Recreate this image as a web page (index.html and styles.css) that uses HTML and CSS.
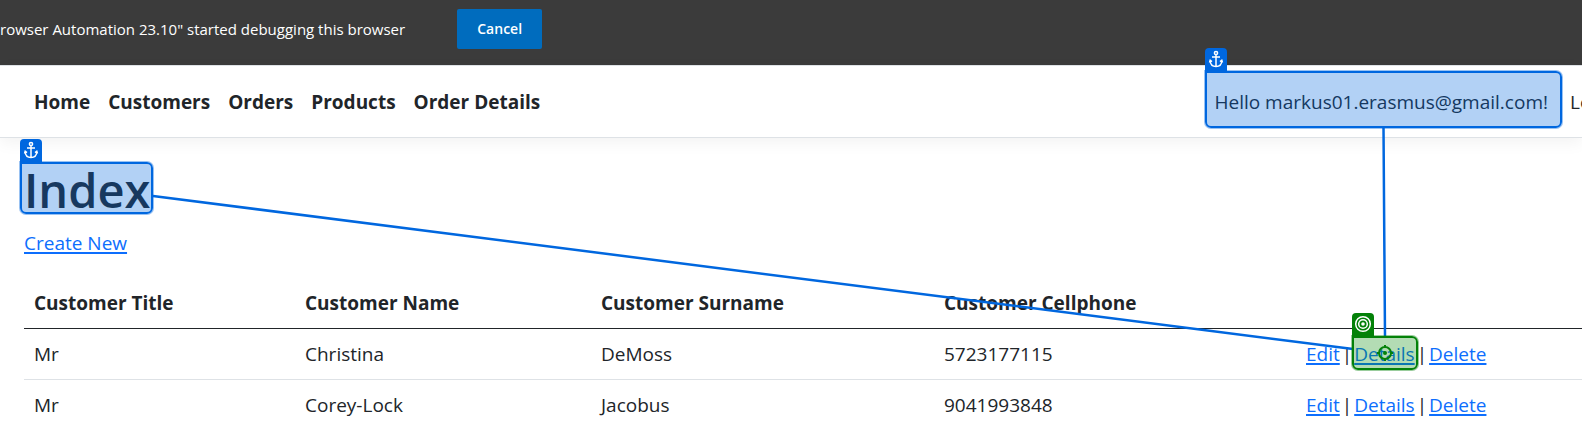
FILE: index.html
```html
<!DOCTYPE html>
<html lang="en">
<head>
<meta charset="utf-8">
<title>Index</title>
<link rel="stylesheet" href="styles.css">
</head>
<body>
<div class="infobar">
  <span class="infobar-text">rowser Automation 23.10" started debugging this browser</span>
  <button class="cancel" type="button">Cancel</button>
</div>
<header class="navbar">
  <nav class="links">
    <a href="#">Home</a>
    <a href="#">Customers</a>
    <a href="#">Orders</a>
    <a href="#">Products</a>
    <a href="#">Order Details</a>
  </nav>
  <div class="account">
    <a href="#">Hello markus01.erasmus@gmail.com!</a>
    <a class="logout" href="#">Logout</a>
  </div>
</header>
<main class="content">
  <h1>Index</h1>
  <p class="create"><a href="#">Create New</a></p>
  <table class="customers">
    <colgroup><col class="c-title"><col class="c-name"><col class="c-surname"><col class="c-phone"><col></colgroup>
    <thead>
      <tr><th>Customer Title</th><th>Customer Name</th><th>Customer Surname</th><th>Customer Cellphone</th><th></th></tr>
    </thead>
    <tbody>
      <tr><td>Mr</td><td>Christina</td><td>DeMoss</td><td>5723177115</td><td><div class="actions"><a href="#">Edit</a><span>|</span><a href="#">Details</a><span>|</span><a href="#">Delete</a></div></td></tr>
      <tr><td>Mr</td><td>Corey-Lock</td><td>Jacobus</td><td>9041993848</td><td><div class="actions"><a href="#">Edit</a><span>|</span><a href="#">Details</a><span>|</span><a href="#">Delete</a></div></td></tr>
    </tbody>
  </table>
</main>
<div class="overlay">
  <svg class="wires" width="1582" height="421" viewBox="0 0 1582 421">
    <path d="M153 196 1353 349M1383.500 127 1385 337"/>
  </svg>
  <div class="marker marker-hello">
    <svg class="tag" viewBox="0 0 22 23"><path d="M11 6.500V18M7 9h8M5 12.500c.3 3.800 2.800 6 6 6s5.700-2.200 6-6M4.500 14.500l.7-2.200 1.800 1.400M17.500 14.500l-.7-2.200-1.800 1.400"/><circle cx="11" cy="5" r="1.600"/></svg>
  </div>
  <div class="marker marker-index">
    <svg class="tag" viewBox="0 0 22 23"><path d="M11 6.500V18M7 9h8M5 12.500c.3 3.800 2.800 6 6 6s5.700-2.200 6-6M4.500 14.500l.7-2.200 1.800 1.400M17.500 14.500l-.7-2.200-1.800 1.400"/><circle cx="11" cy="5" r="1.600"/></svg>
  </div>
  <div class="marker marker-target">
    <svg class="tag" viewBox="0 0 22 23"><circle cx="11" cy="11" r="7.300"/><circle cx="11" cy="11" r="4.300"/><circle class="dot" cx="11" cy="11" r="1.800"/></svg>
    <svg class="cross" viewBox="0 0 18 18"><circle cx="9" cy="9" r="6"/><path d="M9 1v3M9 14v3M1 9h3M14 9h3"/><circle class="dot" cx="9" cy="9" r="2"/></svg>
  </div>
</div>
</body>
</html>
```
FILE: styles.css
```css
* { box-sizing: border-box; }
body {
  margin: 0;
  position: relative;
  overflow: hidden;
  background: #fff;
  color: #212529;
  font: 19px/30px "Open Sans", "Noto Sans", sans-serif;
}
a { color: #0d6efd; text-decoration-thickness: 2px; text-underline-offset: 2px; }
.infobar {
  display: flex;
  align-items: center;
  gap: 52px;
  height: 65px;
  padding-bottom: 8px;
  background: #3b3b3b;
  color: #fff;
  font-size: 15px;
  white-space: nowrap;
}
.cancel {
  width: 85px;
  height: 40px;
  border: 0;
  border-radius: 2px;
  background: #006cbe;
  color: #fff;
  font: 600 14px/20px "Open Sans", sans-serif;
}
.navbar {
  display: flex;
  justify-content: space-between;
  align-items: center;
  height: 73px;
  padding-left: 34px;
  border-top: 1px solid #dee2e6;
  border-bottom: 1px solid #dee2e6;
  box-shadow: 0 5px 15px rgba(0, 0, 0, .05);
  white-space: nowrap;
}
.navbar a { color: #212529; text-decoration: none; }
.links { display: flex; gap: 18px; font-weight: 700; }
.account { display: flex; gap: 22px; }
.account .logout { width: 12px; overflow: hidden; }
.content { padding: 22px 0 0 24px; }
h1 { margin: 0 0 8px; font-size: 47px; font-weight: 600; line-height: 60px; }
.create { margin: 0 0 20px; }
.customers { width: 100%; table-layout: fixed; border-collapse: collapse; }
.c-title { width: 271px; }
.c-name { width: 296px; }
.c-surname { width: 343px; }
.c-phone { width: 362px; }
th, td { padding: 10px; text-align: left; border-bottom: 1px solid #dee2e6; white-space: nowrap; }
th { border-bottom-color: #212529; font-weight: 700; }
tbody tr:last-child td { padding-bottom: 0; border-bottom: 0; }
.actions { display: flex; gap: 2px; }
.overlay { position: absolute; inset: 0; overflow: hidden; pointer-events: none; }
.wires { position: absolute; top: 0; left: 0; fill: none; stroke: #0067df; stroke-width: 2.5; }
.marker {
  --tone: #0067df;
  position: absolute;
  border: 2px solid var(--tone);
  border-radius: 0 6px 6px 6px;
  background: rgba(0, 103, 223, .3);
  box-shadow: 0 0 0 1px rgba(0, 103, 223, .4);
}
.marker-hello { left: 1205px; top: 71px; width: 357px; height: 57px; }
.marker-index { left: 20px; top: 162px; width: 133px; height: 52px; }
.marker-target {
  --tone: #038108;
  left: 1352px;
  top: 336px;
  width: 66px;
  height: 34px;
  background: rgba(3, 138, 8, .3);
  box-shadow: 0 0 0 1px rgba(3, 129, 8, .4);
}
.tag {
  position: absolute;
  left: -2px;
  bottom: 100%;
  width: 22px;
  height: 25px;
  padding-bottom: 2px;
  border-radius: 4px 4px 0 0;
  background: var(--tone);
  fill: none;
  stroke: #fff;
  stroke-width: 1.5;
}
.cross { position: absolute; left: 22px; top: 6px; width: 18px; height: 18px; fill: none; stroke: var(--tone); stroke-width: 2; }
.tag .dot { fill: #fff; stroke: none; }
.cross .dot { fill: var(--tone); stroke: none; }
```
